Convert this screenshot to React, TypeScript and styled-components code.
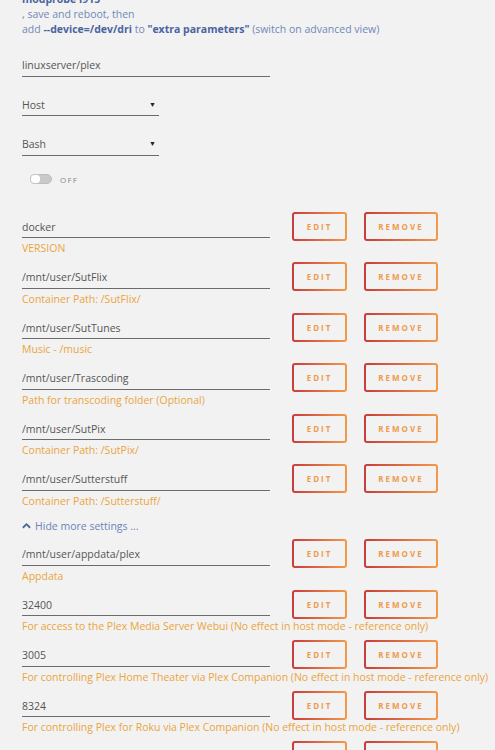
import styled, { createGlobalStyle } from "styled-components";

const GlobalStyle = createGlobalStyle`
  html, body {
    margin: 0;
    padding: 0;
    background: #f2f2f2;
    overflow: hidden;
  }
  body {
    font-family: "Open Sans", "Liberation Sans", sans-serif;
    font-size: 10.5px;
    color: #555;
  }
`;

const Page = styled.div`
  padding: 0 0 0 22px;
  width: 473px;
`;

const Note = styled.div`
  margin-top: -8px;
  color: #7088b8;
  line-height: 15px;
  white-space: nowrap;

  strong {
    color: #4a64a0;
    font-weight: 700;
  }
`;

const Field = styled.div<{ $width: number }>`
  width: ${(p) => p.$width}px;
  height: 20.5px;
  line-height: 16px;
  padding-top: 1px;
  padding-bottom: 3px;
  border-bottom: 1.5px solid #6b6b6b;
  color: #555;
  display: flex;
  justify-content: space-between;
  align-items: flex-start;
  box-sizing: border-box;
`;

const Caret = styled.span`
  font-size: 7px;
  color: #222;
  padding-right: 3px;
`;

const Block = styled.div<{ $top: number }>`
  margin-top: ${(p) => p.$top}px;
`;

const ToggleRow = styled.div`
  margin-top: 18px;
  padding-left: 8px;
  display: flex;
  align-items: center;
  gap: 8px;
`;

const Track = styled.div`
  width: 22px;
  height: 10px;
  border-radius: 5px;
  background: #c9c9c9;
  border: 1px solid #bdbdbd;
  position: relative;
  box-sizing: border-box;
`;

const Knob = styled.div`
  position: absolute;
  left: -1px;
  top: -1px;
  width: 11px;
  height: 10px;
  border-radius: 4px;
  background: #fff;
  border: 1px solid #c4c4c4;
  box-sizing: border-box;
`;

const ToggleLabel = styled.span`
  font-size: 8px;
  letter-spacing: 1.2px;
  color: #888;
`;

const List = styled.div`
  margin-top: 33px;
`;

const Row = styled.div`
  display: flex;
  align-items: flex-start;
  gap: 22px;
  height: 50.6px;
`;

const Col = styled.div`
  width: 248px;
  flex-shrink: 0;
  display: flex;
  flex-direction: column;
`;

const Hint = styled.div`
  color: #eba53d;
  line-height: 16px;
  padding-top: 2px;
  white-space: nowrap;
`;

const Actions = styled.div`
  display: flex;
  gap: 17px;
  margin-top: -6px;
`;

const GradButton = styled.button<{ $w: number }>`
  width: ${(p) => p.$w}px;
  height: 29px;
  padding: 0;
  border: 2px solid transparent;
  border-radius: 3px;
  background:
    linear-gradient(#f2f2f2, #f2f2f2) padding-box,
    linear-gradient(90deg, #c93c3c, #f29a4a) border-box;
  color: #f09a4c;
  font-family: "Open Sans", "Liberation Sans", sans-serif;
  font-size: 8px;
  font-weight: 700;
  letter-spacing: 2px;
  cursor: pointer;
`;

const Toggle = styled.div`
  display: flex;
  align-items: center;
  gap: 4px;
  color: #6a84b8;
  height: 23.6px;
  line-height: 16px;
  margin-top: -7px;
  margin-bottom: 7.4px;
`;

const rowsA = [
  { value: "docker", hint: "VERSION" },
  { value: "/mnt/user/SutFlix", hint: "Container Path: /SutFlix/" },
  { value: "/mnt/user/SutTunes", hint: "Music - /music" },
  { value: "/mnt/user/Trascoding", hint: "Path for transcoding folder (Optional)" },
  { value: "/mnt/user/SutPix", hint: "Container Path: /SutPix/" },
  { value: "/mnt/user/Sutterstuff", hint: "Container Path: /Sutterstuff/" },
];

const rowsB = [
  { value: "/mnt/user/appdata/plex", hint: "Appdata" },
  { value: "32400", hint: "For access to the Plex Media Server Webui (No effect in host mode - reference only)" },
  { value: "3005", hint: "For controlling Plex Home Theater via Plex Companion (No effect in host mode - reference only)" },
  { value: "8324", hint: "For controlling Plex for Roku via Plex Companion (No effect in host mode - reference only)" },
  { value: "", hint: "" },
];

const SettingRow = ({ value, hint }: { value: string; hint: string }) => (
  <Row>
    <Col>
      <Field $width={248}>{value}</Field>
      <Hint>{hint}</Hint>
    </Col>
    <Actions>
      <GradButton $w={55}>EDIT</GradButton>
      <GradButton $w={74}>REMOVE</GradButton>
    </Actions>
  </Row>
);

const App = () => {
  return (
    <Page>
      <GlobalStyle />
      <Note>
        <strong>modprobe i915</strong>
        <br />, save and reboot, then
        <br />
        add <strong>--device=/dev/dri</strong> to <strong>"extra parameters"</strong> (switch on advanced view)
      </Note>

      <Block $top={19}>
        <Field $width={248}>linuxserver/plex</Field>
      </Block>
      <Block $top={19}>
        <Field $width={137}>
          Host <Caret>▼</Caret>
        </Field>
      </Block>
      <Block $top={19}>
        <Field $width={137}>
          Bash <Caret>▼</Caret>
        </Field>
      </Block>

      <ToggleRow>
        <Track>
          <Knob />
        </Track>
        <ToggleLabel>OFF</ToggleLabel>
      </ToggleRow>

      <List>
        {rowsA.map((r, i) => (
          <SettingRow key={i} value={r.value} hint={r.hint} />
        ))}
        <Toggle>
          <svg width="9" height="7" viewBox="0 0 10 7">
            <path d="M1 6 L5 2 L9 6" fill="none" stroke="#4a64a0" strokeWidth="2" />
          </svg>
          Hide more settings ...
        </Toggle>
        {rowsB.map((r, i) => (
          <SettingRow key={i} value={r.value} hint={r.hint} />
        ))}
      </List>
    </Page>
  );
};

export default App;
